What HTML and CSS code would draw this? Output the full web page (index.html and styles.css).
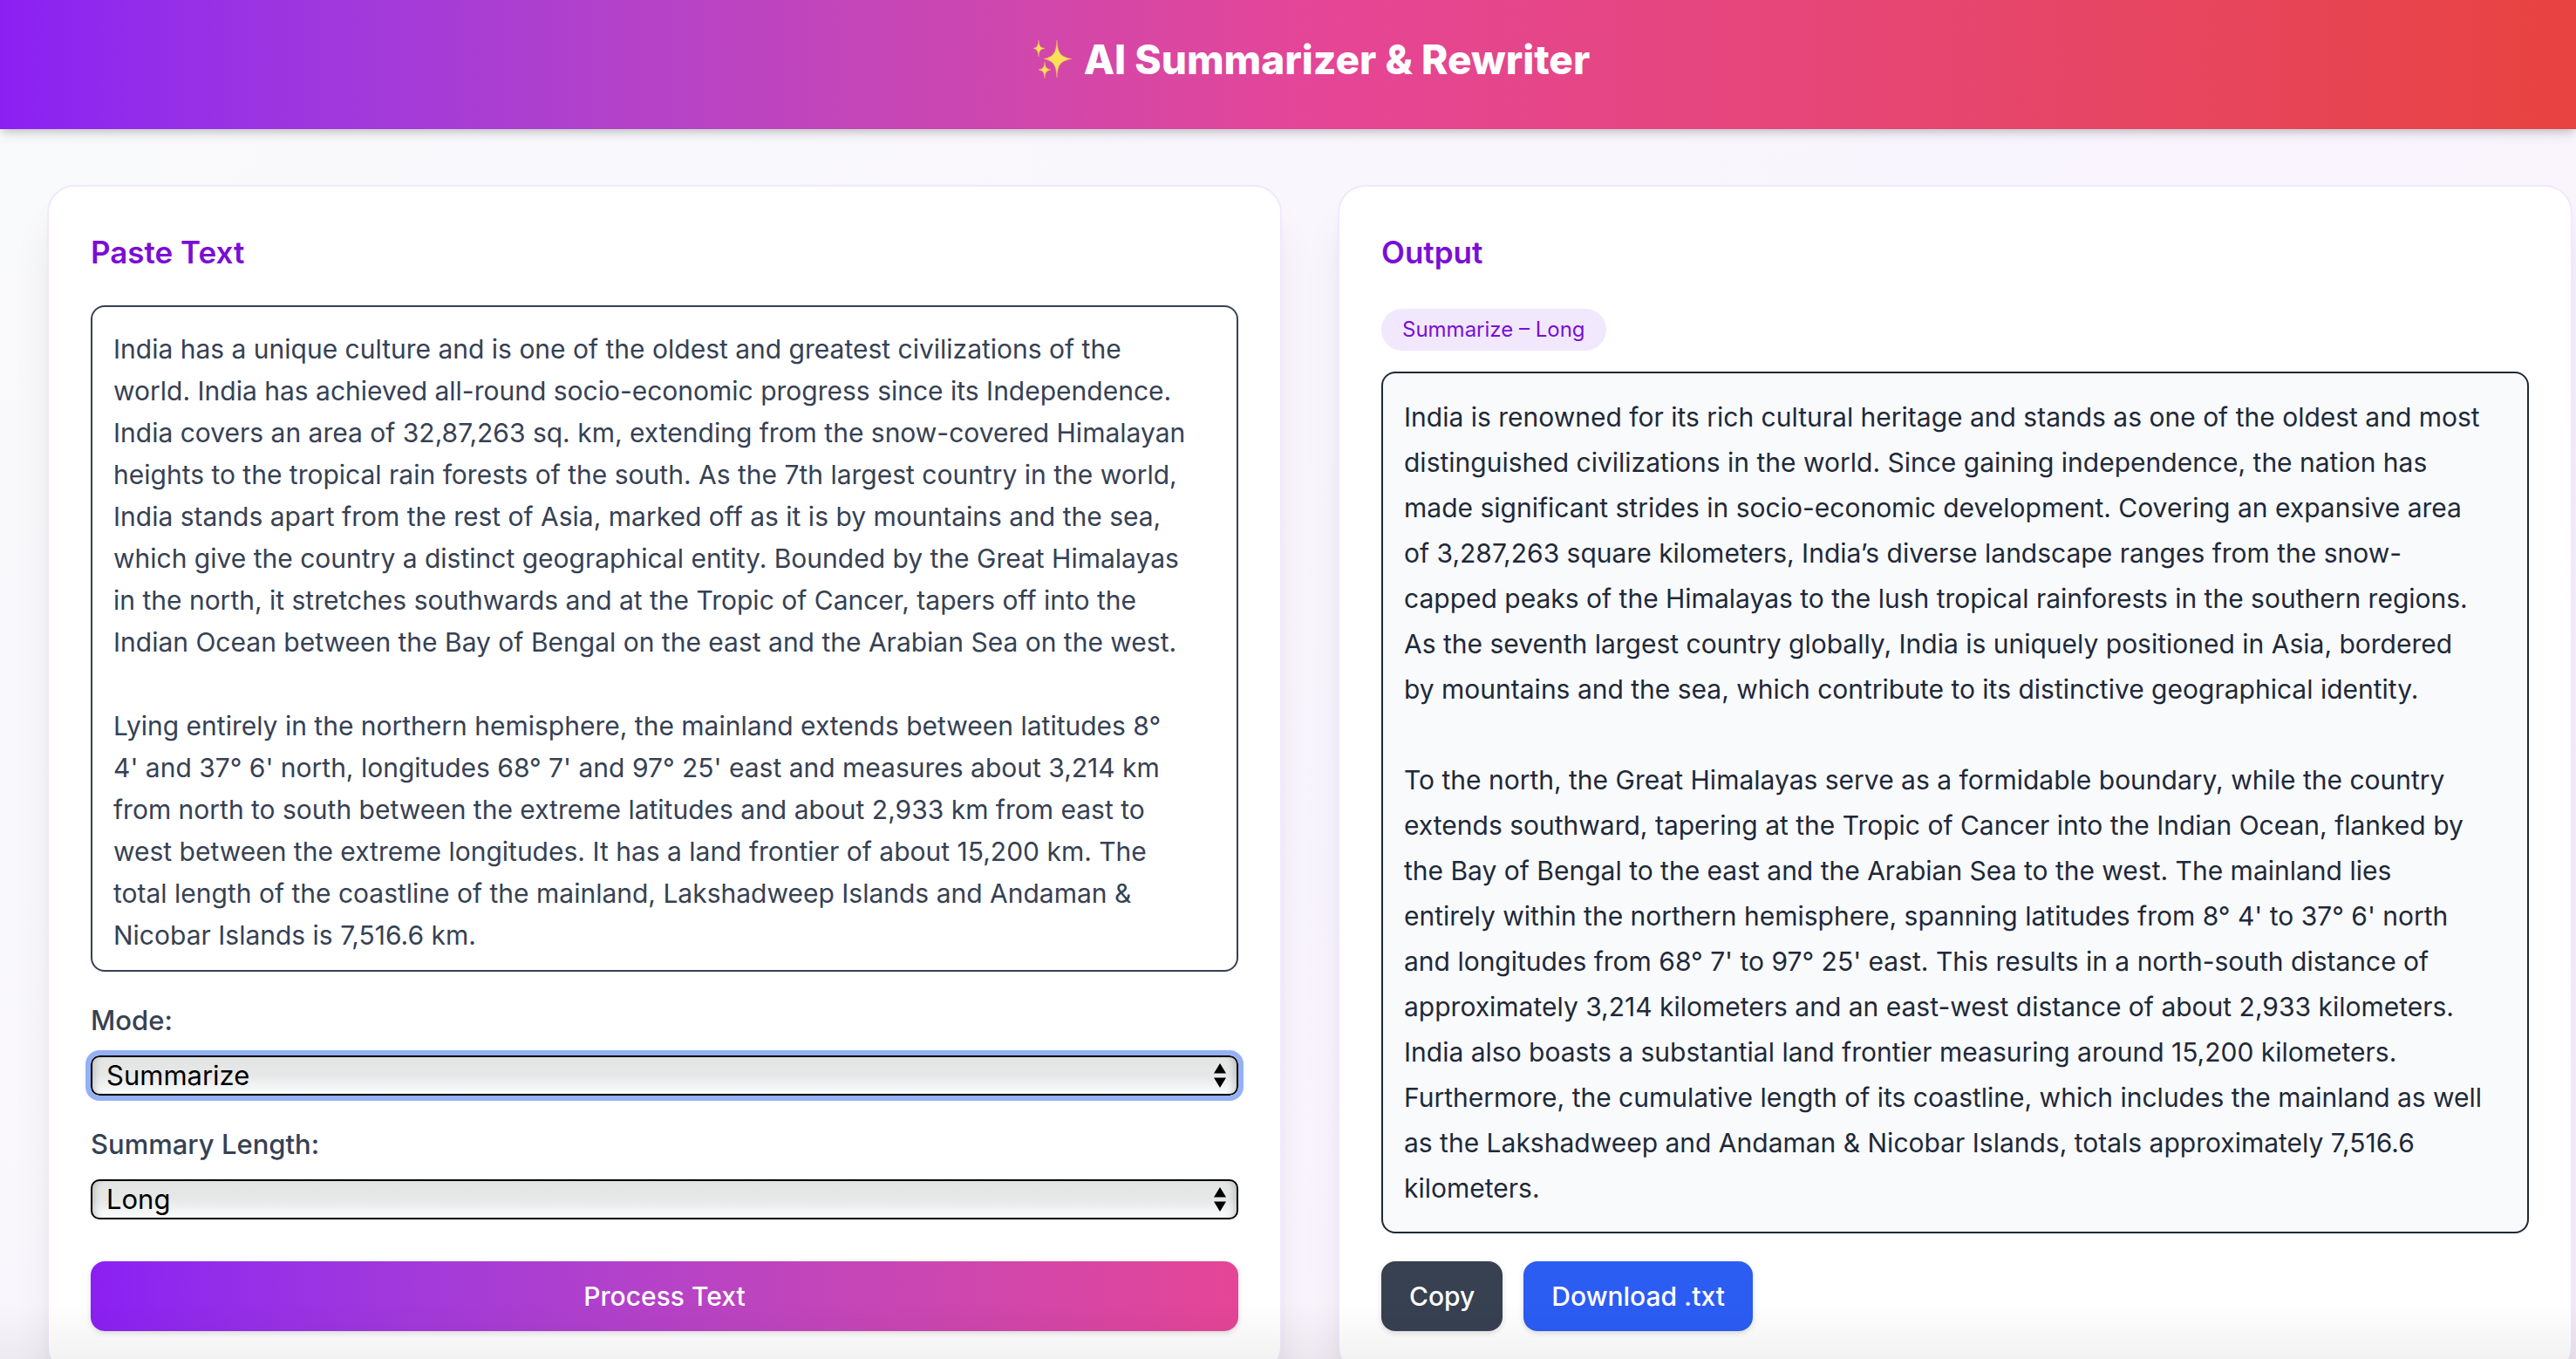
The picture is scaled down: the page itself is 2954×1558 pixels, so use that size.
FILE: index.html
```html
<!DOCTYPE html>
<html lang="en">
<head>
<meta charset="utf-8">
<meta name="viewport" content="width=device-width, initial-scale=1">
<title>AI Summarizer &amp; Rewriter</title>
<link rel="stylesheet" href="styles.css">
</head>
<body>
<header class="site-header">
  <h1 class="site-title">
    <svg class="sparkles" viewBox="0 0 44 44" aria-hidden="true">
      <path d="M27 0C28 14 30 19 44 21.500C30 24 28 29 27 43C26 29 24 24 12 21.500C24 19 26 14 27 0Z"/>
      <path d="M6 0C6.500 7 8 8.500 13 9.500C8 10.500 6.500 12 6 19C5.500 12 4 10.500 0 9.500C4 8.500 5.500 7 6 0Z"/>
      <path d="M13 25C13.500 31 15 33 20 34C15 35 13.500 37 13 44C12.500 37 11 35 6 34C11 33 12.500 31 13 25Z"/>
    </svg>
    <span>AI Summarizer &amp; Rewriter</span>
  </h1>
</header>

<main class="workspace">
  <form class="card">
    <h2 class="card-title" id="paste-title">Paste Text</h2>
    <textarea class="source-text" rows="15" aria-labelledby="paste-title" spellcheck="false">India has a unique culture and is one of the oldest and greatest civilizations of the
world. India has achieved all-round socio-economic progress since its Independence.
India covers an area of 32,87,263 sq. km, extending from the snow-covered Himalayan
heights to the tropical rain forests of the south. As the 7th largest country in the world,
India stands apart from the rest of Asia, marked off as it is by mountains and the sea,
which give the country a distinct geographical entity. Bounded by the Great Himalayas
in the north, it stretches southwards and at the Tropic of Cancer, tapers off into the
Indian Ocean between the Bay of Bengal on the east and the Arabian Sea on the west.

Lying entirely in the northern hemisphere, the mainland extends between latitudes 8°
4' and 37° 6' north, longitudes 68° 7' and 97° 25' east and measures about 3,214 km
from north to south between the extreme latitudes and about 2,933 km from east to
west between the extreme longitudes. It has a land frontier of about 15,200 km. The
total length of the coastline of the mainland, Lakshadweep Islands and Andaman &amp;
Nicobar Islands is 7,516.6 km.</textarea>

    <div class="field">
      <label class="field-label" for="mode">Mode:</label>
      <div class="select-wrap">
        <select class="select select-active" id="mode">
          <option selected>Summarize</option>
          <option>Rewrite</option>
        </select>
        <svg class="select-arrows" viewBox="0 0 14 28" aria-hidden="true"><path d="M7 0L14 11.500H0ZM7 28L0 16.500H14Z"/></svg>
      </div>
    </div>

    <div class="field">
      <label class="field-label" for="length">Summary Length:</label>
      <div class="select-wrap">
        <select class="select" id="length">
          <option>Short</option>
          <option>Medium</option>
          <option selected>Long</option>
        </select>
        <svg class="select-arrows" viewBox="0 0 14 28" aria-hidden="true"><path d="M7 0L14 11.500H0ZM7 28L0 16.500H14Z"/></svg>
      </div>
    </div>

    <button class="button button-process" type="button">Process Text</button>
  </form>

  <section class="card">
    <h2 class="card-title">Output</h2>
    <div class="result-meta"><span class="tag">Summarize – Long</span></div>
    <div class="result">
      <p>India is renowned for its rich cultural heritage and stands as one of the oldest and most<br>
      distinguished civilizations in the world. Since gaining independence, the nation has<br>
      made significant strides in socio-economic development. Covering an expansive area<br>
      of 3,287,263 square kilometers, India’s diverse landscape ranges from the snow-<br>
      capped peaks of the Himalayas to the lush tropical rainforests in the southern regions.<br>
      As the seventh largest country globally, India is uniquely positioned in Asia, bordered<br>
      by mountains and the sea, which contribute to its distinctive geographical identity.</p>
      <p>To the north, the Great Himalayas serve as a formidable boundary, while the country<br>
      extends southward, tapering at the Tropic of Cancer into the Indian Ocean, flanked by<br>
      the Bay of Bengal to the east and the Arabian Sea to the west. The mainland lies<br>
      entirely within the northern hemisphere, spanning latitudes from 8° 4' to 37° 6' north<br>
      and longitudes from 68° 7' to 97° 25' east. This results in a north-south distance of<br>
      approximately 3,214 kilometers and an east-west distance of about 2,933 kilometers.<br>
      India also boasts a substantial land frontier measuring around 15,200 kilometers.<br>
      Furthermore, the cumulative length of its coastline, which includes the mainland as well<br>
      as the Lakshadweep and Andaman &amp; Nicobar Islands, totals approximately 7,516.6<br>
      kilometers.</p>
    </div>
    <div class="actions">
      <button class="button button-copy" type="button">Copy</button>
      <button class="button button-download" type="button">Download .txt</button>
    </div>
  </section>
</main>
<div class="edge-fade"></div>
</body>
</html>
```

FILE: styles.css
```css
*,
*::before,
*::after {
  box-sizing: border-box;
}

body {
  margin: 0;
  min-height: 100vh;
  font-family: Inter, "Liberation Sans", sans-serif;
  font-size: 30px;
  line-height: 48px;
  color: #364153;
  background: linear-gradient(135deg, #f9fafb, #f9f5fe 55%, #fbf2f9);
}

h1,
h2,
p {
  margin: 0;
}

.site-header {
  padding: 38px 0 50px 54px;
  color: #fff;
  background: linear-gradient(90deg in oklab, #8b1ff3, #e54596 51%, #e8433f);
  box-shadow: 0 8px 12px -2px rgba(0, 0, 0, 0.12), 0 4px 8px -2px rgba(0, 0, 0, 0.12);
}

.site-title {
  display: flex;
  align-items: center;
  justify-content: center;
  gap: 14px;
  font-size: 46px;
  line-height: 60px;
  font-weight: 800;
}

.sparkles {
  width: 44px;
  height: 44px;
  fill: #fbe05a;
  stroke: #f3b05f;
  stroke-width: 0.5;
}

.workspace {
  display: grid;
  grid-template-columns: 1fr 1fr;
  gap: 64px;
  padding: 64px 4px 64px 54px;
}

.card {
  display: flex;
  flex-direction: column;
  min-width: 0;
  padding: 48px;
  border: 2px solid #f1e8fd;
  border-radius: 32px;
  background: #fff;
  box-shadow: 0 40px 50px -10px rgba(0, 0, 0, 0.1), 0 16px 20px -12px rgba(0, 0, 0, 0.1);
}

.card-title {
  margin-bottom: 34px;
  font-size: 35px;
  line-height: 54px;
  font-weight: 600;
  color: #7a0ed6;
}

.source-text {
  display: block;
  width: 100%;
  margin: 0 0 32px;
  padding: 24px 24px 16px;
  border: 2px solid #364153;
  border-radius: 16px;
  outline: none;
  resize: none;
  background: #fff;
  font: inherit;
  color: inherit;
}

.field {
  display: flex;
  flex-direction: column;
  gap: 16px;
  margin-bottom: 32px;
  font-size: 31px;
}

.field-label {
  font-weight: 500;
}

.select-wrap {
  display: grid;
  align-items: center;
}

.select,
.select-arrows {
  grid-area: 1 / 1;
}

.select {
  width: 100%;
  height: 46px;
  padding: 0 48px 0 16px;
  appearance: none;
  border: 2px solid #000;
  border-radius: 10px;
  outline: none;
  background: linear-gradient(#e3e5e4, #e6e8e8 50%, #fbfcfd);
  box-shadow: inset 8px 0 8px -6px rgba(0, 0, 0, 0.2), inset -8px 0 8px -6px rgba(0, 0, 0, 0.2);
  font: inherit;
  line-height: 40px;
  color: #000;
}

.select-active {
  outline: 6px solid #95b1f5;
}

.select-arrows {
  justify-self: end;
  width: 14px;
  height: 28px;
  margin-right: 14px;
  pointer-events: none;
}

.button {
  height: 80px;
  padding: 0 32px;
  border: 0;
  border-radius: 16px;
  font: inherit;
  font-weight: 500;
  color: #fff;
  box-shadow: 0 2px 6px rgba(0, 0, 0, 0.14);
}

.button-process {
  margin-top: 16px;
  background: linear-gradient(90deg in oklab, #8b1ff3, #e54596);
}

.result-meta {
  display: flex;
  padding-top: 4px;
  margin-bottom: 24px;
}

.tag {
  padding: 0 24px;
  border-radius: 24px;
  font-size: 24px;
  background: #f1e8fd;
  color: #7a0ed6;
}

.result {
  padding: 24px;
  border: 2px solid #1e2939;
  border-radius: 16px;
  background: #f9fafb;
  color: #1e2939;
  line-height: 52px;
}

.result p + p {
  margin-top: 52px;
}

.actions {
  display: flex;
  gap: 24px;
  margin-top: 32px;
}

.button-copy {
  background: #374151;
}

.button-download {
  background: #2b5df3;
}

.edge-fade {
  position: fixed;
  inset: auto 0 0;
  height: 64px;
  background: linear-gradient(transparent, rgba(0, 0, 0, 0.05));
  pointer-events: none;
}
```
